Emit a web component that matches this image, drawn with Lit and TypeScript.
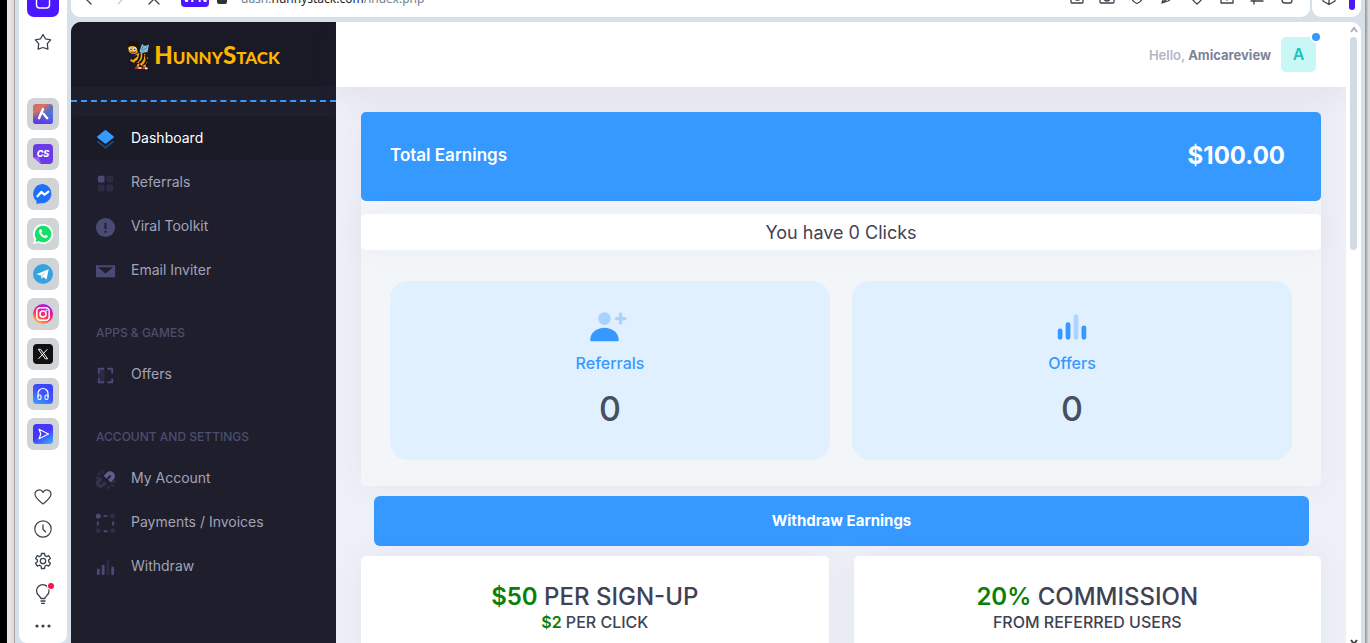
import { LitElement, html, svg, css } from "lit";
import { customElement } from "lit/decorators.js";
import { classMap } from "lit/directives/class-map.js";

const icon = (size: number, viewBox: string, body: unknown) =>
  html`<svg width=${size} height=${size} viewBox=${viewBox} fill="none" aria-hidden="true">${body}</svg>`;

/* Browser chrome icons */
const chrome = {
  home: svg`<rect x="1" y="1" width="32" height="32" rx="7" fill="#4b17ff"/><rect x="10.500" y="9" width="13" height="14" rx="3" stroke="#fff" stroke-width="1.400" transform="translate(0 1)"/>`,
  star: svg`<path d="M9 1.500l2.400 4.300 5.300 1.100-3.400 3.700.6 5.600L9 14.500l-4.900 1.700.6-5.600L1.300 6.900l5.300-1.100z" stroke="#39434b" stroke-width="1.300" stroke-linejoin="round"/>`,
  heart: svg`<path d="M9 16C5 12.800 1 9.800 1 6.300A4.200 4.200 0 0 1 9 4.400a4.200 4.200 0 0 1 8 1.900C17 9.800 13 12.800 9 16z" stroke="#39434b" stroke-width="1.200" stroke-linejoin="round"/>`,
  clock: svg`<circle cx="9" cy="9" r="8.200" stroke="#39434b" stroke-width="1.200"/><path d="M9 4.500V9.300l3 3" stroke="#39434b" stroke-width="1.300"/>`,
  gear: svg`<path d="M7.400 1h3.200l.4 2.300 1.500.8 2.200-.9 1.700 2.800-1.800 1.500v1.800l1.800 1.500-1.700 2.800-2.200-.9-1.500.8-.4 2.500H7.400L7 13.500l-1.500-.8-2.200.9-1.700-2.800 1.800-1.500V7.500L1.600 6l1.700-2.800 2.200.9L7 3.300z" transform="translate(0 .5)" stroke="#39434b" stroke-width="1.300" stroke-linejoin="round"/><circle cx="9" cy="9" r="2.700" stroke="#39434b" stroke-width="1.300"/>`,
  bulb: svg`<path d="M7 14.500c0-2-4.500-3.300-4.500-7.500a6.300 6.300 0 0 1 12.600 0c0 4.200-4.300 5.500-4.300 7.500z" stroke="#39434b" stroke-width="1.300" stroke-linejoin="round"/><path d="M6.500 17h5M7 19.300h4" stroke="#39434b" stroke-width="1.300"/><circle cx="17" cy="2" r="4" fill="#fff"/><circle cx="17" cy="2" r="3" fill="#fa1150"/>`,
  dots: svg`<g fill="#39434b"><circle cx="3" cy="10" r="1.600"/><circle cx="9" cy="10" r="1.600"/><circle cx="15" cy="10" r="1.600"/></g>`,
};

const apps: { name: string; art: unknown }[] = [
  { name: "Aria", art: svg`<defs><linearGradient id="ga" x1="0" y1="0" x2=".8" y2="1"><stop stop-color="#c96a6c"/><stop offset=".3" stop-color="#d9725f"/><stop offset=".6" stop-color="#4f6fc9"/><stop offset="1" stop-color="#31a6ea"/></linearGradient><linearGradient id="gb" x1="0" y1="0" x2="0" y2="1"><stop offset=".4" stop-color="#7a20e8" stop-opacity="0"/><stop offset="1" stop-color="#6a1df0" stop-opacity=".8"/></linearGradient></defs><rect width="20" height="20" rx="3" fill="url(#ga)"/><rect width="20" height="20" rx="3" fill="url(#gb)"/><path d="M10 5L6 14.200M10.500 9.800l3.700 4.400" stroke="#fff" stroke-width="2.400" stroke-linecap="round"/>` },
  { name: "CS", art: svg`<path d="M4 0h12a4 4 0 0 1 4 4v12a4 4 0 0 1-4 4H8L0 13V4a4 4 0 0 1 4-4z" fill="#6c3be8"/><path d="M0 13l6 .5L8 20z" fill="#a45cf4"/><text x="10" y="13" text-anchor="middle" font-family="Inter, sans-serif" font-size="9" font-weight="800" font-style="italic" fill="#fff">CS</text>` },
  { name: "Messenger", art: svg`<path d="M10 0a10 9.700 0 1 1-3 19.200L3.500 20v-3A9.700 9.700 0 0 1 10 0z" fill="#1f6fff"/><path d="M4.500 12.200L8.300 8l3.200 2.600 4-3" stroke="#fff" stroke-width="2.300" stroke-linejoin="round" stroke-linecap="round"/>` },
  { name: "WhatsApp", art: svg`<path d="M10 0a10 10 0 1 1-4.700 18.800L0 20l1.300-5A10 10 0 0 1 10 0z" fill="#fff"/><path d="M10 1.700a8.300 8.300 0 1 1-4.200 15.400L2.500 18l.8-3.300A8.300 8.300 0 0 1 10 1.700z" fill="#16e06b"/><path d="M6.800 5.500c-1.700 1.500-.7 4.200 1.300 6.200s4.800 3.200 6.300 1.500c.7-.9.400-1.300-.4-1.800-1.200-.7-1.500-.4-2.300.4-1.500-.5-2.900-1.800-3.400-3.400.8-.8 1-1 .5-2.200-.5-1-.9-1.400-2-.7z" fill="#fff"/>` },
  { name: "Telegram", art: svg`<circle cx="10" cy="10" r="10" fill="#34a4de"/><path d="M3.300 10.200L15.700 5.200l-2.200 10.300-3.300-2.500-1.800 1.800-.4-3.200z" fill="#fff"/><path d="M8 11.700l5.500-4.500-4.300 5.500z" fill="#b9dcf0"/>` },
  { name: "Instagram", art: svg`<defs><linearGradient id="gi" x1=".2" y1="1" x2=".7" y2="0"><stop stop-color="#ffc53a"/><stop offset=".4" stop-color="#ff3b58"/><stop offset=".7" stop-color="#e213a8"/><stop offset="1" stop-color="#9b1ff0"/></linearGradient></defs><circle cx="10" cy="10" r="10" fill="url(#gi)"/><rect x="3.800" y="3.800" width="12.400" height="12.400" rx="3.500" stroke="#fff" stroke-width="1.500"/><circle cx="10" cy="10" r="3" stroke="#fff" stroke-width="1.500"/><circle cx="13.600" cy="6.400" r=".9" fill="#fff"/>` },
  { name: "X", art: svg`<rect width="20" height="20" rx="4" fill="#111"/><path d="M5.300 5.300h2.300l7 9.500h-2.300zM14.300 5.300L5.500 14.800" stroke="#fff" stroke-width="1"/>` },
  { name: "Player", art: svg`<defs><linearGradient id="gp" x1=".7" y1="0" x2=".2" y2="1"><stop stop-color="#3a40ff"/><stop offset=".5" stop-color="#3f56ff"/><stop offset="1" stop-color="#38a0ff"/></linearGradient></defs><rect width="20" height="20" rx="3.500" fill="url(#gp)"/><path d="M5 13V9.500a5 5 0 0 1 10 0V13" stroke="#fff" stroke-width="1.200"/><rect x="5" y="11" width="3" height="4.500" rx="1.200" stroke="#fff" stroke-width="1.100"/><rect x="12" y="11" width="3" height="4.500" rx="1.200" stroke="#fff" stroke-width="1.100"/>` },
  { name: "Flow", art: svg`<defs><linearGradient id="gf" x1=".2" y1="0" x2=".8" y2="1"><stop stop-color="#4436f5"/><stop offset=".5" stop-color="#4438ff"/><stop offset="1" stop-color="#3ba6ff"/></linearGradient></defs><rect width="20" height="20" rx="3.500" fill="url(#gf)"/><path d="M6 5.200l9.500 4.800L6 14.800l1.800-4.800z" stroke="#fff" stroke-width="1.200" stroke-linejoin="round"/>` },
];

/* Dashboard icons, on a 24 unit grid */
const glyph: Record<string, unknown> = {
  layers: svg`<path d="M3.500 13.800L12 20.500l8.500-6.700" stroke="#3699ff" stroke-opacity=".35" stroke-width="2"/><path d="M11 2.600a1.600 1.600 0 0 1 2 0l7.400 6a1 1 0 0 1 0 1.500L13 16a1.600 1.600 0 0 1-2 0l-7.400-5.900a1 1 0 0 1 0-1.500z" fill="#3699ff"/>`,
  tiles: svg`<g fill="#494b74"><rect x="4" y="4" width="7" height="7" rx="1.500"/><g opacity=".3"><rect x="13" y="4" width="7" height="7" rx="1.500"/><rect x="4" y="13" width="7" height="7" rx="1.500"/><rect x="13" y="13" width="7" height="7" rx="1.500"/></g></g>`,
  alert: svg`<circle cx="12" cy="12" r="10" fill="#494b74"/><path d="M12 7v6.500M12 15.500v2" stroke="#1e1e2d" stroke-width="2"/>`,
  mail: svg`<path d="M2 5.500h20v12.500H2z" fill="#494b74"/><path d="M4 7.500l8 6.500 8-6.500z" fill="#1e1e2d"/>`,
  frame: svg`<path d="M4 4h7v16H4z" fill="#494b74" opacity=".3"/><path d="M10.500 5H5v5M5 15v4h5.500M14 5h5v5M19 15v4h-5" stroke="#494b74" stroke-width="2"/>`,
  link: svg`<path d="M11.500 9.500l3.200-3.200a3 3 0 0 1 4.300 4.300l-3 3" stroke="#5c5e90" stroke-width="4"/><g opacity=".45"><path d="M12 15l-3 3a3 3 0 0 1-4.300-4.300l3-3" stroke="#494b74" stroke-width="4"/><path d="M8.500 2.500l.8 3M4 5.500l2.500 2M2 10l3 .5M15 18.500l.5 3.500M18 17l3 2M19 14.500l3.500-.5" stroke="#494b74" stroke-width="1.800"/></g>`,
  nodes: svg`<g fill="#494b74"><circle cx="4.500" cy="4.500" r="2.600"/><g opacity=".35"><circle cx="19.500" cy="4.500" r="2.600"/><circle cx="4.500" cy="19.500" r="2.600"/><circle cx="19.500" cy="19.500" r="2.600"/></g></g><path d="M10 4h4M10 20h4M4 10v4M20 10v4" stroke="#494b74" stroke-width="2"/>`,
  bars: svg`<g fill="currentColor"><rect x="3" y="13" width="3" height="7" rx="1.500"/><rect x="8" y="9" width="3" height="11" rx="1.500"/><rect x="13" y="4" width="3" height="16" rx="1.500" opacity=".3"/><rect x="18" y="11" width="3" height="9" rx="1.500"/></g>`,
  person: svg`<g fill="#3699ff" transform="translate(-2.500 0)"><circle cx="11" cy="6.700" r="4" opacity=".33"/><path d="M2 20a9 7.600 0 0 1 18 0c0 .6-.3 1-1 1H3c-.7 0-1-.4-1-1z"/><path d="M20 3.200c.6 0 1 .4 1 1v1.800h1.800a1 1 0 0 1 0 2H21v1.700a1 1 0 0 1-2 0V8h-1.700a1 1 0 0 1 0-2H19V4.200c0-.6.400-1 1-1z" transform="translate(1.200 -.3)" opacity=".33"/></g>`,
};

const groups: { title?: string; items: { label: string; icon: string; active?: boolean }[] }[] = [
  { items: [
    { label: "Dashboard", icon: "layers", active: true },
    { label: "Referrals", icon: "tiles" },
    { label: "Viral Toolkit", icon: "alert" },
    { label: "Email Inviter", icon: "mail" },
  ] },
  { title: "Apps & Games", items: [{ label: "Offers", icon: "frame" }] },
  { title: "Account and Settings", items: [
    { label: "My Account", icon: "link" },
    { label: "Payments / Invoices", icon: "nodes" },
    { label: "Withdraw", icon: "bars" },
  ] },
];

@customElement("browser-rail")
class BrowserRail extends LitElement {
  static styles = css`
    :host { display: flex; flex-direction: column; align-items: center; width: 48px; background: #fff; box-sizing: border-box; overflow: hidden; border-radius: 0 0 8px 8px; }
    button { border: 0; padding: 0; background: none; display: grid; place-items: center; flex: none; }
    svg { display: block; overflow: visible; }
    .home { height: 18px; display: flex; align-items: flex-end; }
    .star { margin-top: 15px; }
    .apps { display: grid; gap: 8px; margin-top: 47px; }
    .apps button { width: 32px; height: 32px; border-radius: 7px; background: #d0d4d7; }
    .tools { display: grid; gap: 14px; margin-top: auto; padding-bottom: 9px; }
  `;
  render() {
    return html`
      <div class="home"><button aria-label="Workspace">${icon(34, "0 0 34 34", chrome.home)}</button></div>
      <button class="star" aria-label="Bookmarks">${icon(18, "0 0 18 18", chrome.star)}</button>
      <div class="apps">
        ${apps.map((a) => html`<button aria-label=${a.name}>${icon(20, "0 0 20 20", a.art)}</button>`)}
      </div>
      <div class="tools">
        <button aria-label="Favourites">${icon(18, "0 0 18 18", chrome.heart)}</button>
        <button aria-label="History">${icon(18, "0 0 18 18", chrome.clock)}</button>
        <button aria-label="Settings">${icon(18, "0 0 18 18", chrome.gear)}</button>
        <button aria-label="Tips">${icon(18, "0 0 18 18", chrome.bulb)}</button>
        <button aria-label="More">${icon(18, "0 0 18 18", chrome.dots)}</button>
      </div>`;
  }
}

@customElement("browser-bar")
class BrowserBar extends LitElement {
  static styles = css`
    :host { display: flex; gap: 2px; height: 17px; overflow: hidden; font-family: "Noto Sans", sans-serif; }
    .bar, .side { background: #fff; display: flex; align-items: flex-end; border-radius: 0 0 9px 9px; box-sizing: border-box; }
    .bar { flex: 1; padding: 0 14px 0 8px; }
    .side { width: 49px; padding: 0 6px 0 8px; justify-content: space-between; }
    button { border: 0; padding: 0; background: none; display: block; }
    svg { display: block; overflow: visible; }
    .nav { display: flex; gap: 15px; padding-bottom: 8px; }
    .vpn { margin: 0 8px 10px 18px; width: 28px; height: 18px; border-radius: 4px; background: #4b17ff; color: #fff; font: 700 12px/18px "Noto Sans", sans-serif; }
    .lock { width: 10px; height: 12px; border-radius: 2px; background: #2b353e; margin: 0 14px 13px 0; }
    .url { flex: 1; font-size: 12px; line-height: 20px; color: #6d7f8f; padding-bottom: 8px; }
    .url b { font-weight: 400; color: #1b242c; }
    .actions { display: flex; gap: 12px; padding-bottom: 9px; }
    .cube { padding-bottom: 8px; }
    .mark { width: 6px; height: 24px; border-radius: 0 0 3px 3px; background: #4b17ff; margin-bottom: 7px; }
  `;
  render() {
    const line = (d: string) => svg`<path d=${d} stroke="#39434b" stroke-width="1.300" stroke-linecap="round" stroke-linejoin="round"/>`;
    const actions: [string, string][] = [
      ["Reader", "M3 5v7q0 1 1 1h10q1 0 1-1V5M8 10h3"],
      ["Snapshot", "M2 4v8q0 1 1 1h12q1 0 1-1V4M6 8a3 3 0 0 0 6 0M9 9v1"],
      ["Shield", "M4 5v4q1 3 5 4.500Q13 12 14 9V5"],
      ["Send", "M4 13l2-6M4 13l6-2q4-2 5-6M5 12l6-4"],
      ["Favourite", "M3 6q0 3 6 8q6-5 6-8"],
      ["Download", "M3 5v8h12V5M9 3v6M7 8l2 2 2-2"],
      ["Tune", "M3 11h12M3 7h12M6 10v4"],
      ["Battery", "M4 4v6q0 3 3 3h5q2 0 2-3V4"],
    ];
    return html`
      <div class="bar">
        <div class="nav">
          <button aria-label="Back">${icon(18, "0 0 18 18", line("M12 3L7 8l5 5"))}</button>
          <button aria-label="Forward">${icon(18, "0 0 18 18", svg`<path d="M6 3l5 5-5 5" stroke="#c3c9ce" stroke-width="1.300"/>`)}</button>
          <button aria-label="Stop">${icon(18, "0 0 18 18", line("M4 3l10 10M14 3L4 13"))}</button>
        </div>
        <button class="vpn">VPN</button>
        <span class="lock"></span>
        <span class="url">dash.<b>hunnystack.com</b>/index.php</span>
        <div class="actions">
          ${actions.map(([n, d]) => html`<button aria-label=${n}>${icon(18, "0 0 18 18", line(d))}</button>`)}
        </div>
      </div>
      <div class="side">
        <button class="cube" aria-label="Extensions">${icon(18, "0 0 18 18", line("M3 4v6l6 3.500 6-3.500V4M9 8v5M3 5l6 3 6-3"))}</button>
        <span class="mark"></span>
      </div>`;
  }
}

@customElement("dash-menu")
class DashMenu extends LitElement {
  static styles = css`
    :host { display: block; width: 265px; flex: none; background: #1e1e2d; color: #a2a3b7; }
    .brand { height: 65px; display: flex; align-items: center; justify-content: center; background: #1a1a27; text-decoration: none; gap: 4px; color: #ffb400; font: 900 24px/30px "Lato", sans-serif; font-variant-caps: small-caps; }
    .brand svg { display: block; }
    .rule { border-top: 2px dashed #3699ff; margin: 13px 0 14px; }
    ul { list-style: none; margin: 0; padding: 0; }
    h2 { margin: 27px 0 0; padding: 0 25px; font-size: 12px; line-height: 28px; font-weight: 500; text-transform: uppercase; color: #4c4e6f; }
    .item { display: flex; align-items: center; gap: 14px; height: 44px; padding: 0 23px; color: #a2a3b7; text-decoration: none; font-size: 14px; line-height: 20px; box-sizing: border-box; border-radius: 4px; }
    .item svg { display: block; color: #494b74; margin-top: 2px; }
    .active { background: #1b1b28; color: #fff; }
    .pad { padding-top: 5px; }
  `;
  render() {
    return html`
      <a class="brand" href="#" aria-label="HunnyStack">
        <svg width="23" height="30" viewBox="0 0 23 30" fill="none" aria-hidden="true">
          <path d="M12.500 11L15 4l3 2 4-1.500L20.500 12 14 13z" fill="#86bdd3"/><path d="M14.500 10l2-4.500M15.500 11l5-4" stroke="#456f86" stroke-width=".8"/>
          <path d="M3 20c1.500-1 4-2 5.500-5 2-2 6-3 9-1s5 6 4 9-4.500 4-6.500 3-3-3.500-5.500-3.500S4.500 23 3 20z" fill="#f2a41c"/>
          <path d="M5 19.500l5-4M8 22.500c3-1 5-4 5-9M12 23c3-1 5-5 4-9.500M15.500 26c3-2 5-6 3-11M19 26c2-2 3-4 2-7" stroke="#15120f" stroke-width="1.900"/>
          <circle cx="6.800" cy="8.500" r="5.600" fill="#f0a01d"/><path d="M1 7c0-8 12.500-8 12 2.500-1 2-1.500 2.500-2.500 3C11 7 7 4.500 1 7z" fill="#15120f"/>
          <path d="M4 3L2 0M9 3l1-3" stroke="#15120f" stroke-width="1"/>
          <circle cx="3.700" cy="9" r="1.700" fill="#d7edf4"/><circle cx="7.700" cy="9" r="1.900" fill="#d7edf4"/><circle cx="4" cy="9.300" r=".9" fill="#2c5d78"/><circle cx="7.700" cy="9.300" r=".9" fill="#2c5d78"/>
          <path d="M4 12.300q3 1.500 5-.5" stroke="#8c2e18"/><path d="M11.500 24l-1 3M17 25l1 2.500" stroke="#f2a41c" stroke-width="2"/>
          <path d="M7.500 29q1.500-3.500 5-2v2zM15 28q3-3 5.500 1H15z" fill="#d92c2c"/><path d="M11.500 28h3M18 28.300h2.500" stroke="#fff" stroke-width="1.700"/>
        </svg>
        <span>HunnyStack</span>
      </a>
      <div class="rule"></div>
      <nav>
        ${groups.map((g) => html`
          ${g.title ? html`<h2>${g.title}</h2>` : ""}
          <ul class=${classMap({ pad: !!g.title })}>
            ${g.items.map((i) => html`<li><a href="#" class=${classMap({ item: true, active: !!i.active })}>${icon(23, "0 0 24 24", glyph[i.icon])}<span>${i.label}</span></a></li>`)}
          </ul>`)}
      </nav>`;
  }
}

@customElement("dash-content")
class DashContent extends LitElement {
  static styles = css`
    :host { display: block; flex: 1; min-width: 0; background: #eef0f8; color: #3f4254; }
    header { height: 65px; background: #fff; display: flex; align-items: center; justify-content: flex-end; gap: 10px; padding: 0 30px; box-shadow: 0 10px 30px rgba(82, 63, 105, .08); font-size: 13px; font-weight: 600; color: #b5b5c3; }
    header b { color: #7e8299; font-weight: 700; }
    .avatar { position: relative; width: 35px; height: 35px; border: 0; border-radius: 5px; background: #c9f7f5; color: #1bc5bd; font: 600 16px/35px "Inter", sans-serif; padding: 0; }
    .badge { position: absolute; top: -6px; right: -6px; width: 8px; height: 8px; border-radius: 50%; background: #3699ff; border: 2px solid #fff; }
    main { padding: 25px; }
    .panel { background: #f3f6f9; border-radius: 5px; box-shadow: 0 0 30px rgba(82, 63, 105, .05); padding-bottom: 26px; }
    .total { display: flex; align-items: center; justify-content: space-between; height: 89px; padding: 0 36px 3px 29px; box-sizing: border-box; background: #3699ff; color: #fff; border-radius: 5px; font-size: 17px; font-weight: 600; }
    .total strong { font-size: 24px; font-weight: 700; }
    .clicks { margin: 13px 0 31px; background: #fff; border-radius: 5px; text-align: center; font-size: 18px; line-height: 34px; font-weight: 400; box-shadow: 0 0 30px rgba(82, 63, 105, .05); padding-top: 2px; }
    .stats { display: grid; grid-template-columns: 1fr 1fr; gap: 22px; padding: 0 29px; }
    .stat { display: flex; flex-direction: column; align-items: center; height: 179px; box-sizing: border-box; padding-top: 27px; background: #e1f0ff; border-radius: 18px; color: #3699ff; }
    .stat svg { display: block; overflow: visible; }
    .stat a { color: #3699ff; text-decoration: none; font-size: 16px; line-height: 24px; font-weight: 500; margin-top: 5px; }
    .stat output { color: #464e5f; font-size: 34px; line-height: 40px; font-weight: 500; margin-top: 14px; }
    .withdraw { display: block; width: calc(100% - 25px); height: 50px; margin: 10px 12px 10px 13px; border: 0; border-radius: 6px; background: #3699ff; color: #fff; font: 700 15px/24px "Inter", sans-serif; }
    .offers { display: grid; grid-template-columns: 1fr 1fr; gap: 25px; }
    .offer { background: #fff; border-radius: 5px; text-align: center; padding: 25px 24px 40px; font-size: 16px; line-height: 20px; font-weight: 500; box-shadow: 0 0 30px rgba(82, 63, 105, .05); }
    .offer h3 { margin: 0; font-size: 24px; line-height: 31px; font-weight: 500; }
    .offer p { margin: 0; }
    .offer b { color: #0a8009; font-weight: 600; }
  `;
  render() {
    return html`
      <header>
        <span>Hello, <b>Amicareview</b></span>
        <button class="avatar" aria-label="Profile">A<span class="badge"></span></button>
      </header>
      <main>
        <section class="panel">
          <div class="total"><span>Total Earnings</span><strong>$100.00</strong></div>
          <div class="clicks">You have 0 Clicks</div>
          <div class="stats">
            <div class="stat">${icon(38, "0 0 24 24", glyph.person)}<a href="#">Referrals</a><output>0</output></div>
            <div class="stat">${icon(38, "0 0 24 24", glyph.bars)}<a href="#">Offers</a><output>0</output></div>
          </div>
        </section>
        <button class="withdraw">Withdraw Earnings</button>
        <section class="offers">
          <div class="offer"><h3><b>$50</b> PER SIGN-UP</h3><p><b>$2</b> PER CLICK</p></div>
          <div class="offer"><h3><b>20%</b> COMMISSION</h3><p>FROM REFERRED USERS</p></div>
        </section>
      </main>`;
  }
}

@customElement("app-root")
class AppRoot extends LitElement {
  static styles = css`
    :host { display: flex; height: 100vh; overflow: hidden; background: #d5e0e8; font-family: "Inter", sans-serif; }
    .edge { flex: none; width: 7px; background: linear-gradient(90deg, #eeedea, #dcdad6); border-left: 7px solid #000; border-right: 1px solid #a9a3a6; }
    .far { flex: none; width: 5px; background: linear-gradient(90deg, #8f9296, #d9d9d9 70%); }
    browser-rail { flex: none; margin: 0 4px; }
    .window { flex: 1; min-width: 0; display: flex; flex-direction: column; gap: 5px; margin-right: 4px; }
    .page { flex: 1; min-height: 0; display: flex; border-radius: 10px 10px 0 0; overflow: hidden; background: #fff; }
    .scroll { flex: none; width: 15px; display: flex; flex-direction: column; align-items: center; background: #fff; box-sizing: border-box; padding: 4px 0 0; }
    .thumb { width: 7px; height: 213px; border-radius: 4px; background: #d0dbe4; margin: 3px 0 auto; }
    .scroll svg { display: block; }
  `;
  render() {
    return html`
      <div class="edge"></div>
      <browser-rail></browser-rail>
      <div class="window">
        <browser-bar></browser-bar>
        <div class="page">
          <dash-menu></dash-menu>
          <dash-content></dash-content>
          <div class="scroll">
            ${icon(8, "0 0 8 8", svg`<path d="M1 6l3-4 3 4" stroke="#b0b4b8" stroke-width="2"/>`)}
            <div class="thumb"></div>
            ${icon(8, "0 0 8 8", svg`<path d="M1 5l3 4 3-4" stroke="#444" stroke-width="2"/>`)}
          </div>
        </div>
      </div>
      <div class="far"></div>`;
  }
}
